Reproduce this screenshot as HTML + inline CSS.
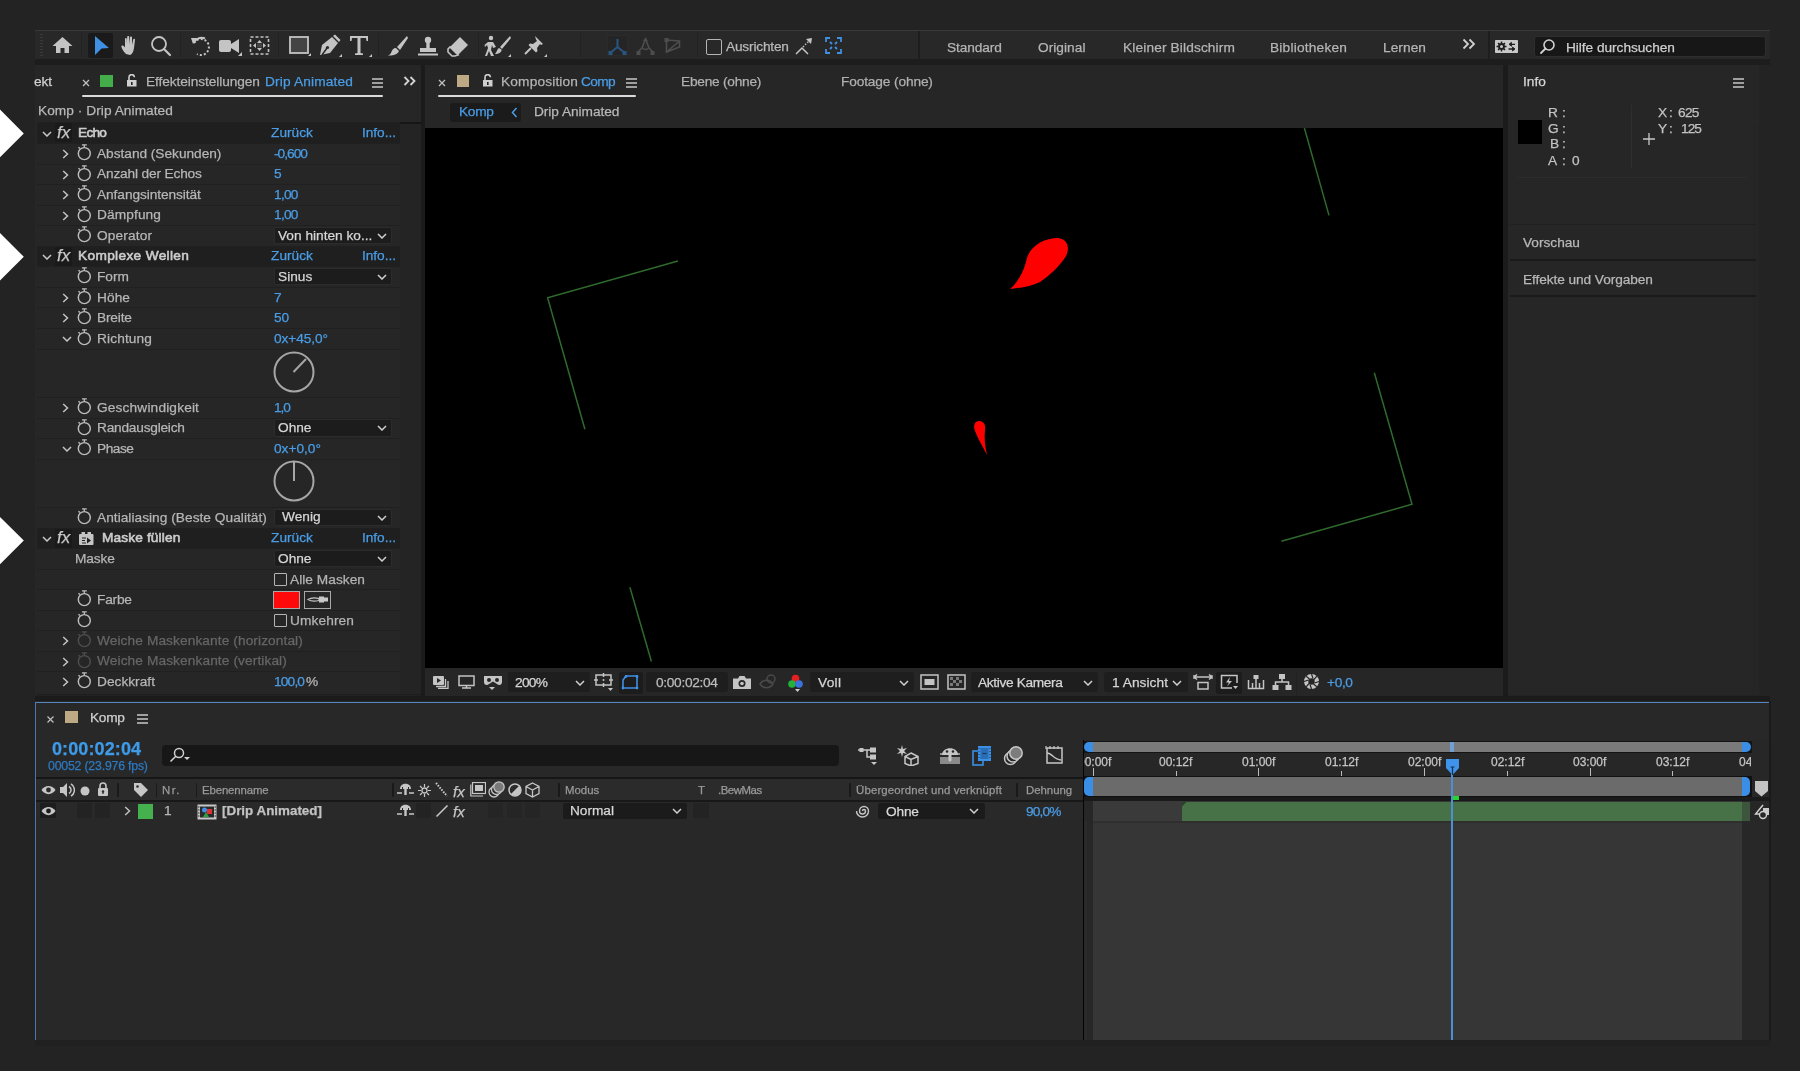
<!DOCTYPE html><html><head><meta charset="utf-8"><style>
html,body{margin:0;padding:0;}
body{width:1800px;height:1071px;background:#232323;position:relative;overflow:hidden;font-family:"Liberation Sans", sans-serif;}
div,svg{position:absolute;box-sizing:border-box;}
.t{white-space:nowrap;-webkit-text-stroke:0.25px currentColor;will-change:transform;}
</style></head><body>
<div style="left:35px;top:30px;width:1735px;height:1px;background:#393939;"></div>
<div style="left:35px;top:31px;width:1735px;height:28px;background:#282828;"></div>
<div style="left:35px;top:59px;width:1735px;height:6px;background:#1d1d1d;"></div>
<div style="left:40px;top:34px;width:3px;height:22px;background:repeating-linear-gradient(#3a3a3a 0 1px,transparent 1px 3px)"></div>
<div style="left:81px;top:33px;width:1px;height:24px;background:#222;"></div>
<div style="left:180px;top:33px;width:1px;height:24px;background:#222;"></div>
<div style="left:278px;top:33px;width:1px;height:24px;background:#222;"></div>
<div style="left:378px;top:33px;width:1px;height:24px;background:#222;"></div>
<div style="left:478px;top:33px;width:1px;height:24px;background:#222;"></div>
<div style="left:580px;top:33px;width:1px;height:24px;background:#222;"></div>
<div style="left:697px;top:33px;width:1px;height:24px;background:#222;"></div>
<div style="left:918px;top:31px;width:2px;height:28px;background:#1e1e1e;"></div>
<div style="left:1488px;top:31px;width:2px;height:28px;background:#1e1e1e;"></div>
<div style="left:88px;top:33px;width:25px;height:25px;background:#1a1a1a;border-radius:2px;"></div>
<svg style="left:52px;top:36px;" width="21" height="18" viewBox="0 0 21 18"><path d="M10.5 1 L20.5 10 L17 10 L17 17 L12.5 17 L12.5 12 L8.5 12 L8.5 17 L4 17 L4 10 L0.5 10 Z" fill="#c4c4c4"/></svg>
<svg style="left:93px;top:35px;" width="17" height="21" viewBox="0 0 17 21"><path d="M2 1 L16 13 L8.5 13.5 L2 20 Z" fill="#3f8fe3"/></svg>
<svg style="left:120px;top:35px;" width="21" height="21" viewBox="0 0 21 21"><path d="M6 19 C3 16 1 12 1.5 11 C2.2 10 3.5 10.5 5 12.5 L5 4 C5 2.8 6.8 2.8 6.8 4 L6.8 9.5 L7.2 2 C7.2 0.8 9.2 0.8 9.2 2 L9.4 9.5 L10 2.5 C10 1.3 12 1.3 12 2.5 L12 10 L13.2 4.5 C13.4 3.3 15.2 3.5 15 4.8 L14 13 C13.5 17 12 19.5 10 20 Z" fill="#c4c4c4"/></svg>
<svg style="left:150px;top:35px;" width="22" height="22" viewBox="0 0 22 22"><circle cx="9" cy="9" r="7" fill="none" stroke="#c4c4c4" stroke-width="1.8"/><path d="M14 14 L20 20" stroke="#c4c4c4" stroke-width="2.2" stroke-linecap="round"/></svg>
<svg style="left:189px;top:35px;" width="23" height="22" viewBox="0 0 23 22"><path d="M5 8 A8 8 0 1 1 8 19" fill="none" stroke="#c4c4c4" stroke-width="2" stroke-dasharray="2 2"/><path d="M2 3 L9 3 L4 9 Z" fill="#c4c4c4"/><path d="M5 8 A8 8 0 0 1 16 3.5" fill="none" stroke="#c4c4c4" stroke-width="2"/></svg>
<svg style="left:218px;top:35px;" width="25" height="22" viewBox="0 0 25 22"><rect x="1" y="5" width="12" height="12" rx="2" fill="#c4c4c4"/><path d="M13 9 L21 4 L21 18 L13 13 Z" fill="#c4c4c4"/><path d="M20 21 L24 17 L24 21 Z" fill="#c4c4c4"/></svg>
<svg style="left:249px;top:35px;" width="22" height="22" viewBox="0 0 22 22"><rect x="1.5" y="2" width="18" height="17" fill="none" stroke="#c4c4c4" stroke-width="1.6" stroke-dasharray="3 2"/><path d="M10.5 5 L13 8 L8 8Z M10.5 16 L13 13 L8 13Z M4 10.5 L7 8 L7 13Z M17 10.5 L14 8 L14 13Z" fill="#c4c4c4"/><rect x="8" y="8.5" width="5" height="4" fill="#444"/></svg>
<svg style="left:288px;top:35px;" width="24" height="22" viewBox="0 0 24 22"><rect x="2" y="2" width="18" height="16" fill="#444" stroke="#c4c4c4" stroke-width="1.8"/><path d="M20 21 L23 18 L23 21Z" fill="#c4c4c4"/></svg>
<svg style="left:317px;top:34px;" width="26" height="24" viewBox="0 0 26 24"><path d="M15 3 L21 9 L13 19 L3 21 L5 11 Z" fill="#c4c4c4"/><path d="M5 21 L10 14" stroke="#282828" stroke-width="1.5"/><circle cx="10.5" cy="13.5" r="1.6" fill="#282828"/><path d="M16 2 L18 0.5 L23.5 6 L22 8Z" fill="#c4c4c4"/><path d="M22 23 L25 20 L25 23Z" fill="#c4c4c4"/></svg>
<svg style="left:348px;top:34px;" width="25" height="24" viewBox="0 0 25 24"><path d="M2 2 L20 2 L20 7 L18.5 7 L18 4 L12.5 4 L12.5 19 L15 19.5 L15 21 L7 21 L7 19.5 L9.5 19 L9.5 4 L4 4 L3.5 7 L2 7 Z" fill="#c4c4c4"/><path d="M21 23 L24 20 L24 23Z" fill="#c4c4c4"/></svg>
<svg style="left:387px;top:35px;" width="22" height="22" viewBox="0 0 22 22"><path d="M20 1 L10 12 L13 15 L21 3 Z" fill="#c4c4c4"/><path d="M9 13 C6 13 5 15 4 18 C3 19.5 2 20 1 20.5 C5 21 10 20 12 16 Z" fill="#c4c4c4"/></svg>
<svg style="left:417px;top:35px;" width="22" height="22" viewBox="0 0 22 22"><circle cx="11" cy="5" r="3.2" fill="#c4c4c4"/><rect x="9.3" y="7" width="3.4" height="6" fill="#c4c4c4"/><rect x="3" y="13" width="16" height="4" fill="#c4c4c4"/><rect x="1" y="18.5" width="20" height="2" fill="#c4c4c4"/></svg>
<svg style="left:447px;top:35px;" width="23" height="22" viewBox="0 0 23 22"><path d="M13 2 L21 10 L11 20 L3 12 Z" fill="#c4c4c4"/><path d="M3 12 L11 20 L8 21 L5 21 L1 17 L1 14Z" fill="none" stroke="#c4c4c4" stroke-width="1.6"/></svg>
<svg style="left:484px;top:34px;" width="28" height="24" viewBox="0 0 28 24"><circle cx="7" cy="4" r="2.2" fill="#c4c4c4"/><path d="M4 8 L9 8 L12 13 L9 14 L8 11 L7 16 L10 22 L7 22 L5 17 L3 22 L1 22 L4 14 L3 11 L1 13 L0.5 11 Z" fill="#c4c4c4"/><path d="M26 2 L16 13 L18 15 L27 4Z" fill="#c4c4c4"/><path d="M15 14 C13 15 13 18 11 20 C15 20 18 18 17.5 15.5Z" fill="#c4c4c4"/><path d="M24 23 L27 20 L27 23Z" fill="#c4c4c4"/></svg>
<svg style="left:523px;top:34px;" width="26" height="24" viewBox="0 0 26 24"><path d="M12 2 L20 10 L18 11 L17 10 L14 14 L14.5 17 L13 18.5 L5.5 11 L7 9.5 L10 10 L14 7 L13 5.5 Z" fill="#c4c4c4"/><path d="M8 14 L2 20" stroke="#c4c4c4" stroke-width="2"/><path d="M21 23 L24 20 L24 23Z" fill="#c4c4c4"/></svg>
<div style="left:607px;top:35px;width:21px;height:21px;background:#252525;border:1px solid #2b2b2b;"></div>
<svg style="left:607px;top:36px;" width="21" height="20" viewBox="0 0 21 20"><path d="M10.5 3 L10.5 11 L3 17 M10.5 11 L18 17" stroke="#285680" stroke-width="2" fill="none"/><rect x="1.5" y="15" width="4" height="4" fill="#285680"/><rect x="15.5" y="15" width="4" height="4" fill="#285680"/></svg>
<svg style="left:635px;top:36px;" width="21" height="20" viewBox="0 0 21 20"><path d="M10.5 3 L14 12 Q10.5 15 7 12 Z" stroke="#4d4d4d" stroke-width="1.6" fill="none"/><path d="M8 5 L10.5 1.5 L13 5Z" fill="#4d4d4d"/><path d="M7 12 L3 16 M14 12 L18 16" stroke="#4d4d4d" stroke-width="1.6"/><rect x="1.5" y="15" width="4" height="4" fill="#4d4d4d"/><rect x="15.5" y="15" width="4" height="4" fill="#4d4d4d"/></svg>
<svg style="left:664px;top:36px;" width="18" height="20" viewBox="0 0 18 20"><path d="M2.5 4 L2.5 16 L15.5 11 L15.5 5 Z M2.5 16 L15.5 5" stroke="#4d4d4d" stroke-width="1.6" fill="none"/><rect x="0.5" y="2" width="4" height="4" fill="#4d4d4d"/></svg>
<div style="left:706px;top:39px;width:16px;height:16px;background:transparent;border:1.6px solid #b5b5b5;border-radius:2px;"></div>
<div class="t" style="left:726px;top:40.20px;font-size:13.7px;line-height:13.7px;color:#b9b9b9;letter-spacing:-0.192px;">Ausrichten</div>
<svg style="left:795px;top:37px;" width="18" height="19" viewBox="0 0 18 19"><path d="M1 17 L7 11 L13 17" stroke="#c4c4c4" stroke-width="1.5" fill="none"/><path d="M8 10 L14 4" stroke="#c4c4c4" stroke-width="1.4" stroke-dasharray="1.5 1.5"/><path d="M11 2 L17 1 L16 7 Z" fill="#c4c4c4"/></svg>
<svg style="left:825px;top:37px;" width="17" height="18" viewBox="0 0 17 18"><path d="M1 5 L1 1 L5 1 M12 1 L16 1 L16 5 M16 12 L16 16 L12 16 M5 16 L1 16 L1 12" stroke="#3f8fe3" stroke-width="1.8" fill="none"/><path d="M5 5 L7 7 M12 5 L10 7 M5 12 L7 10 M12 12 L10 10" stroke="#3f8fe3" stroke-width="1.8"/></svg>
<div class="t" style="left:946.5px;top:40.60px;font-size:13.7px;line-height:13.7px;color:#b5b5b5;letter-spacing:-0.086px;">Standard</div>
<div class="t" style="left:1038.3px;top:40.60px;font-size:13.7px;line-height:13.7px;color:#b5b5b5;letter-spacing:0.042px;">Original</div>
<div class="t" style="left:1122.5px;top:40.60px;font-size:13.7px;line-height:13.7px;color:#b5b5b5;letter-spacing:0.139px;">Kleiner Bildschirm</div>
<div class="t" style="left:1270px;top:40.60px;font-size:13.7px;line-height:13.7px;color:#b5b5b5;letter-spacing:0.215px;">Bibliotheken</div>
<div class="t" style="left:1383px;top:40.60px;font-size:13.7px;line-height:13.7px;color:#b5b5b5;letter-spacing:0.069px;">Lernen</div>
<svg style="left:1462px;top:38px;" width="14" height="12" viewBox="0 0 14 12"><path d="M1.5 1.5 L6 6 L1.5 10.5 M7.5 1.5 L12 6 L7.5 10.5" stroke="#d0d0d0" stroke-width="1.8" fill="none"/></svg>
<svg style="left:1495px;top:40px;" width="23" height="13" viewBox="0 0 23 13"><rect x="0" y="0" width="23" height="13" rx="0.8" fill="#c8c8c8"/><circle cx="6.5" cy="6.5" r="3.4" fill="#1e1e1e"/><circle cx="6.5" cy="6.5" r="1.5" fill="#c8c8c8"/><path d="M6.5 1.5 L6.5 11.5 M1.5 6.5 L11.5 6.5 M3 3 L10 10 M10 3 L3 10" stroke="#1e1e1e" stroke-width="1.5"/><circle cx="6.5" cy="6.5" r="1.5" fill="#c8c8c8"/><path d="M14.5 4.3 L20 4.3 M13.5 9 L19.5 9" stroke="#1e1e1e" stroke-width="1.3"/><path d="M16.5 2.3 L14 4.3 L16.5 6.3Z M17.5 7 L20 9 L17.5 11Z" fill="#1e1e1e" stroke="#1e1e1e" stroke-width="0.8"/></svg>
<div style="left:1534px;top:36px;width:232px;height:21px;background:#171717;border-radius:3px;border:1px solid #2e2e2e;"></div>
<svg style="left:1539px;top:38px;" width="18" height="18" viewBox="0 0 18 18"><circle cx="10" cy="7" r="5" fill="none" stroke="#d0d0d0" stroke-width="1.6"/><path d="M6.5 10.5 L2 15" stroke="#d0d0d0" stroke-width="1.8" stroke-linecap="round"/></svg>
<div class="t" style="left:1566px;top:40.60px;font-size:13.7px;line-height:13.7px;color:#cfcfcf;letter-spacing:-0.041px;">Hilfe durchsuchen</div>
<div style="left:35px;top:65px;width:386px;height:630px;background:#262626;"></div>
<div style="left:421px;top:65px;width:4px;height:635px;background:#1b1b1b;"></div>
<div class="t" style="left:34.4px;top:75.20px;font-size:13.7px;line-height:13.7px;color:#d2d2d2;letter-spacing:-0.137px;">ekt</div>
<svg style="left:82px;top:79px;" width="8" height="8" viewBox="0 0 8 8"><path d="M1 1 L7 7 M7 1 L1 7" stroke="#c0c0c0" stroke-width="1.3"/></svg>
<div style="left:100px;top:75px;width:13px;height:12px;background:#43ad4a;"></div>
<svg style="left:126px;top:74px;" width="11" height="13" viewBox="0 0 11 13"><path d="M3 6 L3 3.5 A2.7 2.7 0 0 1 8.4 3.2" fill="none" stroke="#cfcfcf" stroke-width="1.6"/><rect x="1" y="6" width="9.5" height="6.5" fill="#cfcfcf"/><rect x="5" y="8" width="1.6" height="3" fill="#262626"/></svg>
<div class="t" style="left:146.4px;top:75.20px;font-size:13.7px;line-height:13.7px;color:#b4b4b4;letter-spacing:-0.084px;">Effekteinstellungen</div>
<div class="t" style="left:265.3px;top:75.20px;font-size:13.7px;line-height:13.7px;color:#4a9de6;letter-spacing:0.163px;">Drip Animated</div>
<svg style="left:372px;top:78px;" width="11" height="10" viewBox="0 0 11 10"><path d="M0 1 L11 1 M0 5 L11 5 M0 9 L11 9" stroke="#c8c8c8" stroke-width="1.5"/></svg>
<div style="left:82px;top:95px;width:301px;height:2px;background:#dadada;border-radius:1px;"></div>
<svg style="left:403px;top:76px;" width="14" height="10" viewBox="0 0 14 10"><path d="M1.5 1 L5.5 5 L1.5 9 M7.5 1 L11.5 5 L7.5 9" stroke="#d4d4d4" stroke-width="1.8" fill="none"/></svg>
<div class="t" style="left:38.3px;top:104.00px;font-size:13.7px;line-height:13.7px;color:#b8b8b8;letter-spacing:0.052px;">Komp · Drip Animated</div>
<div style="left:37px;top:122px;width:384px;height:2px;background:#161616;"></div>
<div style="left:400px;top:124px;width:21px;height:571px;background:#242424;"></div>
<div style="left:37px;top:122px;width:363px;height:21px;background:#1f1f1f;"></div>
<div style="left:37px;top:122px;width:363px;height:1px;background:#202020;"></div>
<div style="left:55px;top:123px;width:17px;height:19px;background:#1a1a1a;"></div>
<svg style="left:42px;top:130.5px;" width="10" height="6" viewBox="0 0 10 6"><path d="M1 1 L5.0 5 L9 1" stroke="#c8c8c8" stroke-width="1.5" fill="none"/></svg>
<div class="t" style="left:56.5px;top:123.61px;font-size:17px;line-height:17px;color:#c8c8c8;font-style:italic;font-family:"Liberation Serif",serif;-webkit-text-stroke:0;">fx</div>
<div class="t" style="left:78.3px;top:125.70px;font-size:13.7px;line-height:13.7px;color:#cdcdcd;letter-spacing:-0.742px;-webkit-text-stroke:0.6px #cdcdcd;">Echo</div>
<div class="t" style="left:270.6px;top:125.70px;font-size:13.7px;line-height:13.7px;color:#4a9de6;letter-spacing:0.026px;">Zurück</div>
<div class="t" style="left:362.3px;top:125.70px;font-size:13.7px;line-height:13.7px;color:#4a9de6;letter-spacing:-0.045px;">Info...</div>
<div style="left:37px;top:143px;width:363px;height:21px;background:#262626;"></div>
<div style="left:37px;top:143px;width:363px;height:1px;background:#202020;"></div>
<svg style="left:62px;top:149.05px;" width="7" height="10" viewBox="0 0 7 10"><path d="M1.2 1 L5.5 5 L1.2 9" stroke="#c4c4c4" stroke-width="1.5" fill="none"/></svg>
<svg style="left:77px;top:143.05px;" width="15" height="19" viewBox="0 0 15 19"><circle cx="7.3" cy="10.6" r="6" fill="none" stroke="#bdbdbd" stroke-width="1.45"/><path d="M5 1.9 L9.8 1.9 M7.3 1.9 L7.3 4.6" stroke="#bdbdbd" stroke-width="1.3"/><path d="M1.5 4.2 L2.8 5.5" stroke="#bdbdbd" stroke-width="1.5"/></svg>
<div class="t" style="left:97px;top:146.65px;font-size:13.7px;line-height:13.7px;color:#b6b6b6;letter-spacing:-0.024px;">Abstand (Sekunden)</div>
<div class="t" style="left:274.3px;top:146.65px;font-size:13.7px;line-height:13.7px;color:#4a9de6;letter-spacing:-0.969px;">-0,600</div>
<div style="left:37px;top:164px;width:363px;height:20px;background:#262626;"></div>
<div style="left:37px;top:164px;width:363px;height:1px;background:#202020;"></div>
<svg style="left:62px;top:169.60000000000002px;" width="7" height="10" viewBox="0 0 7 10"><path d="M1.2 1 L5.5 5 L1.2 9" stroke="#c4c4c4" stroke-width="1.5" fill="none"/></svg>
<svg style="left:77px;top:163.60000000000002px;" width="15" height="19" viewBox="0 0 15 19"><circle cx="7.3" cy="10.6" r="6" fill="none" stroke="#bdbdbd" stroke-width="1.45"/><path d="M5 1.9 L9.8 1.9 M7.3 1.9 L7.3 4.6" stroke="#bdbdbd" stroke-width="1.3"/><path d="M1.5 4.2 L2.8 5.5" stroke="#bdbdbd" stroke-width="1.5"/></svg>
<div class="t" style="left:97px;top:167.20px;font-size:13.7px;line-height:13.7px;color:#b6b6b6;letter-spacing:-0.158px;">Anzahl der Echos</div>
<div class="t" style="left:274.3px;top:167.20px;font-size:13.7px;line-height:13.7px;color:#4a9de6;">5</div>
<div style="left:37px;top:184px;width:363px;height:21px;background:#262626;"></div>
<div style="left:37px;top:184px;width:363px;height:1px;background:#202020;"></div>
<svg style="left:62px;top:190.15000000000003px;" width="7" height="10" viewBox="0 0 7 10"><path d="M1.2 1 L5.5 5 L1.2 9" stroke="#c4c4c4" stroke-width="1.5" fill="none"/></svg>
<svg style="left:77px;top:184.15000000000003px;" width="15" height="19" viewBox="0 0 15 19"><circle cx="7.3" cy="10.6" r="6" fill="none" stroke="#bdbdbd" stroke-width="1.45"/><path d="M5 1.9 L9.8 1.9 M7.3 1.9 L7.3 4.6" stroke="#bdbdbd" stroke-width="1.3"/><path d="M1.5 4.2 L2.8 5.5" stroke="#bdbdbd" stroke-width="1.5"/></svg>
<div class="t" style="left:97px;top:187.75px;font-size:13.7px;line-height:13.7px;color:#b6b6b6;letter-spacing:-0.069px;">Anfangsintensität</div>
<div class="t" style="left:274.3px;top:187.75px;font-size:13.7px;line-height:13.7px;color:#4a9de6;letter-spacing:-0.721px;">1,00</div>
<div style="left:37px;top:205px;width:363px;height:20px;background:#262626;"></div>
<div style="left:37px;top:205px;width:363px;height:1px;background:#202020;"></div>
<svg style="left:62px;top:210.70000000000005px;" width="7" height="10" viewBox="0 0 7 10"><path d="M1.2 1 L5.5 5 L1.2 9" stroke="#c4c4c4" stroke-width="1.5" fill="none"/></svg>
<svg style="left:77px;top:204.70000000000005px;" width="15" height="19" viewBox="0 0 15 19"><circle cx="7.3" cy="10.6" r="6" fill="none" stroke="#bdbdbd" stroke-width="1.45"/><path d="M5 1.9 L9.8 1.9 M7.3 1.9 L7.3 4.6" stroke="#bdbdbd" stroke-width="1.3"/><path d="M1.5 4.2 L2.8 5.5" stroke="#bdbdbd" stroke-width="1.5"/></svg>
<div class="t" style="left:97px;top:208.30px;font-size:13.7px;line-height:13.7px;color:#b6b6b6;letter-spacing:0.113px;">Dämpfung</div>
<div class="t" style="left:274.3px;top:208.30px;font-size:13.7px;line-height:13.7px;color:#4a9de6;letter-spacing:-0.721px;">1,00</div>
<div style="left:37px;top:225px;width:363px;height:21px;background:#262626;"></div>
<div style="left:37px;top:225px;width:363px;height:1px;background:#202020;"></div>
<svg style="left:77px;top:225.25000000000006px;" width="15" height="19" viewBox="0 0 15 19"><circle cx="7.3" cy="10.6" r="6" fill="none" stroke="#bdbdbd" stroke-width="1.45"/><path d="M5 1.9 L9.8 1.9 M7.3 1.9 L7.3 4.6" stroke="#bdbdbd" stroke-width="1.3"/><path d="M1.5 4.2 L2.8 5.5" stroke="#bdbdbd" stroke-width="1.5"/></svg>
<div class="t" style="left:97px;top:228.85px;font-size:13.7px;line-height:13.7px;color:#b6b6b6;letter-spacing:0.134px;">Operator</div>
<div style="left:273.7px;top:226.75000000000006px;width:118.5px;height:17.5px;background:#1c1c1c;border:1px solid #2c2c2c;border-radius:2px;"></div>
<div class="t" style="left:278px;top:228.65px;font-size:13.7px;line-height:13.7px;color:#d6d6d6;">Von hinten ko...</div>
<svg style="left:377.2px;top:233.00000000000006px;" width="10" height="6" viewBox="0 0 10 6"><path d="M1 1 L5.0 5 L9 1" stroke="#cfcfcf" stroke-width="1.5" fill="none"/></svg>
<div style="left:37px;top:246px;width:363px;height:20px;background:#1f1f1f;"></div>
<div style="left:37px;top:246px;width:363px;height:1px;background:#202020;"></div>
<div style="left:55px;top:247px;width:17px;height:19px;background:#1a1a1a;"></div>
<svg style="left:42px;top:253.80000000000007px;" width="10" height="6" viewBox="0 0 10 6"><path d="M1 1 L5.0 5 L9 1" stroke="#c8c8c8" stroke-width="1.5" fill="none"/></svg>
<div class="t" style="left:56.5px;top:246.91px;font-size:17px;line-height:17px;color:#c8c8c8;font-style:italic;font-family:"Liberation Serif",serif;-webkit-text-stroke:0;">fx</div>
<div class="t" style="left:78.3px;top:249.00px;font-size:13.7px;line-height:13.7px;color:#cdcdcd;letter-spacing:0.332px;-webkit-text-stroke:0.6px #cdcdcd;">Komplexe Wellen</div>
<div class="t" style="left:270.6px;top:249.00px;font-size:13.7px;line-height:13.7px;color:#4a9de6;letter-spacing:0.026px;">Zurück</div>
<div class="t" style="left:362.3px;top:249.00px;font-size:13.7px;line-height:13.7px;color:#4a9de6;letter-spacing:-0.045px;">Info...</div>
<div style="left:37px;top:266px;width:363px;height:21px;background:#262626;"></div>
<div style="left:37px;top:266px;width:363px;height:1px;background:#202020;"></div>
<svg style="left:77px;top:266.3500000000001px;" width="15" height="19" viewBox="0 0 15 19"><circle cx="7.3" cy="10.6" r="6" fill="none" stroke="#bdbdbd" stroke-width="1.45"/><path d="M5 1.9 L9.8 1.9 M7.3 1.9 L7.3 4.6" stroke="#bdbdbd" stroke-width="1.3"/><path d="M1.5 4.2 L2.8 5.5" stroke="#bdbdbd" stroke-width="1.5"/></svg>
<div class="t" style="left:97px;top:269.95px;font-size:13.7px;line-height:13.7px;color:#b6b6b6;letter-spacing:0.013px;">Form</div>
<div style="left:273.7px;top:267.8500000000001px;width:118.5px;height:17.5px;background:#1c1c1c;border:1px solid #2c2c2c;border-radius:2px;"></div>
<div class="t" style="left:278px;top:269.75px;font-size:13.7px;line-height:13.7px;color:#d6d6d6;">Sinus</div>
<svg style="left:377.2px;top:274.1000000000001px;" width="10" height="6" viewBox="0 0 10 6"><path d="M1 1 L5.0 5 L9 1" stroke="#cfcfcf" stroke-width="1.5" fill="none"/></svg>
<div style="left:37px;top:287px;width:363px;height:20px;background:#262626;"></div>
<div style="left:37px;top:287px;width:363px;height:1px;background:#202020;"></div>
<svg style="left:62px;top:292.9000000000001px;" width="7" height="10" viewBox="0 0 7 10"><path d="M1.2 1 L5.5 5 L1.2 9" stroke="#c4c4c4" stroke-width="1.5" fill="none"/></svg>
<svg style="left:77px;top:286.9000000000001px;" width="15" height="19" viewBox="0 0 15 19"><circle cx="7.3" cy="10.6" r="6" fill="none" stroke="#bdbdbd" stroke-width="1.45"/><path d="M5 1.9 L9.8 1.9 M7.3 1.9 L7.3 4.6" stroke="#bdbdbd" stroke-width="1.3"/><path d="M1.5 4.2 L2.8 5.5" stroke="#bdbdbd" stroke-width="1.5"/></svg>
<div class="t" style="left:97px;top:290.50px;font-size:13.7px;line-height:13.7px;color:#b6b6b6;letter-spacing:0.083px;">Höhe</div>
<div class="t" style="left:274.3px;top:290.50px;font-size:13.7px;line-height:13.7px;color:#4a9de6;">7</div>
<div style="left:37px;top:307px;width:363px;height:21px;background:#262626;"></div>
<div style="left:37px;top:307px;width:363px;height:1px;background:#202020;"></div>
<svg style="left:62px;top:313.4500000000001px;" width="7" height="10" viewBox="0 0 7 10"><path d="M1.2 1 L5.5 5 L1.2 9" stroke="#c4c4c4" stroke-width="1.5" fill="none"/></svg>
<svg style="left:77px;top:307.4500000000001px;" width="15" height="19" viewBox="0 0 15 19"><circle cx="7.3" cy="10.6" r="6" fill="none" stroke="#bdbdbd" stroke-width="1.45"/><path d="M5 1.9 L9.8 1.9 M7.3 1.9 L7.3 4.6" stroke="#bdbdbd" stroke-width="1.3"/><path d="M1.5 4.2 L2.8 5.5" stroke="#bdbdbd" stroke-width="1.5"/></svg>
<div class="t" style="left:97px;top:311.05px;font-size:13.7px;line-height:13.7px;color:#b6b6b6;letter-spacing:-0.158px;">Breite</div>
<div class="t" style="left:274.3px;top:311.05px;font-size:13.7px;line-height:13.7px;color:#4a9de6;">50</div>
<div style="left:37px;top:328px;width:363px;height:21px;background:#262626;"></div>
<div style="left:37px;top:328px;width:363px;height:1px;background:#202020;"></div>
<svg style="left:62px;top:336.0000000000001px;" width="10" height="6" viewBox="0 0 10 6"><path d="M1 1 L5.0 5 L9 1" stroke="#c4c4c4" stroke-width="1.5" fill="none"/></svg>
<svg style="left:77px;top:328.0000000000001px;" width="15" height="19" viewBox="0 0 15 19"><circle cx="7.3" cy="10.6" r="6" fill="none" stroke="#bdbdbd" stroke-width="1.45"/><path d="M5 1.9 L9.8 1.9 M7.3 1.9 L7.3 4.6" stroke="#bdbdbd" stroke-width="1.3"/><path d="M1.5 4.2 L2.8 5.5" stroke="#bdbdbd" stroke-width="1.5"/></svg>
<div class="t" style="left:97px;top:331.60px;font-size:13.7px;line-height:13.7px;color:#b6b6b6;letter-spacing:0.133px;">Richtung</div>
<div class="t" style="left:274.3px;top:331.60px;font-size:13.7px;line-height:13.7px;color:#4a9de6;letter-spacing:-0.087px;">0x+45,0°</div>
<div style="left:37px;top:349px;width:363px;height:48px;background:#262626;"></div>
<div style="left:37px;top:349px;width:363px;height:1px;background:#202020;"></div>
<svg style="left:272px;top:350px;" width="44" height="44" viewBox="0 0 44 44"><circle cx="22" cy="22" r="19.5" fill="none" stroke="#a6a6a6" stroke-width="2"/><path d="M21.5 22 L34 9" stroke="#a6a6a6" stroke-width="2"/></svg>
<div style="left:37px;top:397px;width:363px;height:21px;background:#262626;"></div>
<div style="left:37px;top:397px;width:363px;height:1px;background:#202020;"></div>
<svg style="left:62px;top:403px;" width="7" height="10" viewBox="0 0 7 10"><path d="M1.2 1 L5.5 5 L1.2 9" stroke="#c4c4c4" stroke-width="1.5" fill="none"/></svg>
<svg style="left:77px;top:397.0px;" width="15" height="19" viewBox="0 0 15 19"><circle cx="7.3" cy="10.6" r="6" fill="none" stroke="#bdbdbd" stroke-width="1.45"/><path d="M5 1.9 L9.8 1.9 M7.3 1.9 L7.3 4.6" stroke="#bdbdbd" stroke-width="1.3"/><path d="M1.5 4.2 L2.8 5.5" stroke="#bdbdbd" stroke-width="1.5"/></svg>
<div class="t" style="left:97px;top:400.60px;font-size:13.7px;line-height:13.7px;color:#b6b6b6;letter-spacing:0.161px;">Geschwindigkeit</div>
<div class="t" style="left:274.3px;top:400.60px;font-size:13.7px;line-height:13.7px;color:#4a9de6;letter-spacing:-1.022px;">1,0</div>
<div style="left:37px;top:418px;width:363px;height:20px;background:#262626;"></div>
<div style="left:37px;top:418px;width:363px;height:1px;background:#202020;"></div>
<svg style="left:77px;top:417.55px;" width="15" height="19" viewBox="0 0 15 19"><circle cx="7.3" cy="10.6" r="6" fill="none" stroke="#bdbdbd" stroke-width="1.45"/><path d="M5 1.9 L9.8 1.9 M7.3 1.9 L7.3 4.6" stroke="#bdbdbd" stroke-width="1.3"/><path d="M1.5 4.2 L2.8 5.5" stroke="#bdbdbd" stroke-width="1.5"/></svg>
<div class="t" style="left:97px;top:421.15px;font-size:13.7px;line-height:13.7px;color:#b6b6b6;letter-spacing:-0.219px;">Randausgleich</div>
<div style="left:273.7px;top:419.05px;width:118.5px;height:17.5px;background:#1c1c1c;border:1px solid #2c2c2c;border-radius:2px;"></div>
<div class="t" style="left:278px;top:420.95px;font-size:13.7px;line-height:13.7px;color:#d6d6d6;">Ohne</div>
<svg style="left:377.2px;top:425.3px;" width="10" height="6" viewBox="0 0 10 6"><path d="M1 1 L5.0 5 L9 1" stroke="#cfcfcf" stroke-width="1.5" fill="none"/></svg>
<div style="left:37px;top:438px;width:363px;height:21px;background:#262626;"></div>
<div style="left:37px;top:438px;width:363px;height:1px;background:#202020;"></div>
<svg style="left:62px;top:446.1px;" width="10" height="6" viewBox="0 0 10 6"><path d="M1 1 L5.0 5 L9 1" stroke="#c4c4c4" stroke-width="1.5" fill="none"/></svg>
<svg style="left:77px;top:438.1px;" width="15" height="19" viewBox="0 0 15 19"><circle cx="7.3" cy="10.6" r="6" fill="none" stroke="#bdbdbd" stroke-width="1.45"/><path d="M5 1.9 L9.8 1.9 M7.3 1.9 L7.3 4.6" stroke="#bdbdbd" stroke-width="1.3"/><path d="M1.5 4.2 L2.8 5.5" stroke="#bdbdbd" stroke-width="1.5"/></svg>
<div class="t" style="left:97px;top:441.70px;font-size:13.7px;line-height:13.7px;color:#b6b6b6;letter-spacing:-0.461px;">Phase</div>
<div class="t" style="left:274.3px;top:441.70px;font-size:13.7px;line-height:13.7px;color:#4a9de6;letter-spacing:0.002px;">0x+0,0°</div>
<div style="left:37px;top:459px;width:363px;height:48px;background:#262626;"></div>
<div style="left:37px;top:459px;width:363px;height:1px;background:#202020;"></div>
<svg style="left:272px;top:459px;" width="44" height="44" viewBox="0 0 44 44"><circle cx="22" cy="22" r="19.5" fill="none" stroke="#a6a6a6" stroke-width="2"/><path d="M22 22 L22 3" stroke="#a6a6a6" stroke-width="2"/></svg>
<div style="left:37px;top:507px;width:363px;height:21px;background:#262626;"></div>
<div style="left:37px;top:507px;width:363px;height:1px;background:#202020;"></div>
<svg style="left:77px;top:507.0px;" width="15" height="19" viewBox="0 0 15 19"><circle cx="7.3" cy="10.6" r="6" fill="none" stroke="#bdbdbd" stroke-width="1.45"/><path d="M5 1.9 L9.8 1.9 M7.3 1.9 L7.3 4.6" stroke="#bdbdbd" stroke-width="1.3"/><path d="M1.5 4.2 L2.8 5.5" stroke="#bdbdbd" stroke-width="1.5"/></svg>
<div class="t" style="left:97px;top:510.60px;font-size:13.7px;line-height:13.7px;color:#b6b6b6;letter-spacing:0.034px;">Antialiasing (Beste Qualität)</div>
<div style="left:273.7px;top:508.5px;width:118.5px;height:17.5px;background:#1c1c1c;border:1px solid #2c2c2c;border-radius:2px;"></div>
<div class="t" style="left:282px;top:510.40px;font-size:13.7px;line-height:13.7px;color:#d6d6d6;">Wenig</div>
<svg style="left:377.2px;top:514.75px;" width="10" height="6" viewBox="0 0 10 6"><path d="M1 1 L5.0 5 L9 1" stroke="#cfcfcf" stroke-width="1.5" fill="none"/></svg>
<div style="left:37px;top:528px;width:363px;height:20px;background:#1f1f1f;"></div>
<div style="left:37px;top:528px;width:363px;height:1px;background:#202020;"></div>
<div style="left:55px;top:529px;width:17px;height:19px;background:#1a1a1a;"></div>
<svg style="left:42px;top:535.55px;" width="10" height="6" viewBox="0 0 10 6"><path d="M1 1 L5.0 5 L9 1" stroke="#c8c8c8" stroke-width="1.5" fill="none"/></svg>
<div class="t" style="left:56.5px;top:528.66px;font-size:17px;line-height:17px;color:#c8c8c8;font-style:italic;font-family:"Liberation Serif",serif;-webkit-text-stroke:0;">fx</div>
<svg style="left:79px;top:531.55px;" width="15" height="13" viewBox="0 0 15 13"><rect x="0" y="2" width="14.5" height="11" rx="1" fill="#c4c4c4"/><rect x="2.5" y="0" width="3.5" height="3" fill="#c4c4c4"/><rect x="8.5" y="0" width="3.5" height="3" fill="#c4c4c4"/><path d="M3 6 L7 6 M3 8.5 L6 8.5 M3 11 L7 11" stroke="#1f1f1f" stroke-width="1.2"/><path d="M8 5.5 L12 8.5 L8 11.5Z" fill="#1f1f1f"/></svg>
<div class="t" style="left:101.9px;top:530.75px;font-size:13.7px;line-height:13.7px;color:#cdcdcd;letter-spacing:0.136px;-webkit-text-stroke:0.6px #cdcdcd;">Maske füllen</div>
<div class="t" style="left:270.6px;top:530.75px;font-size:13.7px;line-height:13.7px;color:#4a9de6;letter-spacing:0.026px;">Zurück</div>
<div class="t" style="left:362.3px;top:530.75px;font-size:13.7px;line-height:13.7px;color:#4a9de6;letter-spacing:-0.045px;">Info...</div>
<div style="left:37px;top:548px;width:363px;height:21px;background:#262626;"></div>
<div style="left:37px;top:548px;width:363px;height:1px;background:#202020;"></div>
<div class="t" style="left:74.8px;top:551.70px;font-size:13.7px;line-height:13.7px;color:#b6b6b6;letter-spacing:-0.088px;">Maske</div>
<div style="left:273.7px;top:549.5999999999999px;width:118.5px;height:17.5px;background:#1c1c1c;border:1px solid #2c2c2c;border-radius:2px;"></div>
<div class="t" style="left:278px;top:551.50px;font-size:13.7px;line-height:13.7px;color:#d6d6d6;">Ohne</div>
<svg style="left:377.2px;top:555.8499999999999px;" width="10" height="6" viewBox="0 0 10 6"><path d="M1 1 L5.0 5 L9 1" stroke="#cfcfcf" stroke-width="1.5" fill="none"/></svg>
<div style="left:37px;top:569px;width:363px;height:20px;background:#262626;"></div>
<div style="left:37px;top:569px;width:363px;height:1px;background:#202020;"></div>
<div style="left:274px;top:573.1499999999999px;width:13px;height:13px;background:transparent;border:1.5px solid #b5b5b5;border-radius:1px;"></div>
<div class="t" style="left:289.5px;top:573.05px;font-size:13.7px;line-height:13.7px;color:#b4b4b4;letter-spacing:0.038px;">Alle Masken</div>
<div style="left:37px;top:589px;width:363px;height:21px;background:#262626;"></div>
<div style="left:37px;top:589px;width:363px;height:1px;background:#202020;"></div>
<svg style="left:77px;top:589.1999999999998px;" width="15" height="19" viewBox="0 0 15 19"><circle cx="7.3" cy="10.6" r="6" fill="none" stroke="#bdbdbd" stroke-width="1.45"/><path d="M5 1.9 L9.8 1.9 M7.3 1.9 L7.3 4.6" stroke="#bdbdbd" stroke-width="1.3"/><path d="M1.5 4.2 L2.8 5.5" stroke="#bdbdbd" stroke-width="1.5"/></svg>
<div class="t" style="left:97px;top:592.80px;font-size:13.7px;line-height:13.7px;color:#b6b6b6;letter-spacing:-0.197px;">Farbe</div>
<div style="left:273px;top:591.1999999999998px;width:26.5px;height:17.5px;background:#ff0a0a;border:1.6px solid #a8a8a8;"></div>
<div style="left:304px;top:591.1999999999998px;width:27px;height:17.5px;background:#262626;border:1.6px solid #a8a8a8;"></div>
<svg style="left:306px;top:594.1999999999998px;" width="23" height="11" viewBox="0 0 23 11"><path d="M2 5.5 C5 3.5 9 3.5 13 4.5 L13 6.5 C9 7.5 5 7.5 2 5.5Z" fill="none" stroke="#c8c8c8" stroke-width="1.2"/><rect x="13" y="2.5" width="5" height="6" fill="#c8c8c8"/><rect x="18" y="3.5" width="4" height="4" fill="#c8c8c8"/></svg>
<div style="left:37px;top:610px;width:363px;height:20px;background:#262626;"></div>
<div style="left:37px;top:610px;width:363px;height:1px;background:#202020;"></div>
<svg style="left:77px;top:609.7499999999998px;" width="15" height="19" viewBox="0 0 15 19"><circle cx="7.3" cy="10.6" r="6" fill="none" stroke="#bdbdbd" stroke-width="1.45"/><path d="M5 1.9 L9.8 1.9 M7.3 1.9 L7.3 4.6" stroke="#bdbdbd" stroke-width="1.3"/><path d="M1.5 4.2 L2.8 5.5" stroke="#bdbdbd" stroke-width="1.5"/></svg>
<div style="left:274px;top:614.2499999999998px;width:13px;height:13px;background:transparent;border:1.5px solid #b5b5b5;border-radius:1px;"></div>
<div class="t" style="left:289.5px;top:614.15px;font-size:13.7px;line-height:13.7px;color:#b4b4b4;letter-spacing:0.115px;">Umkehren</div>
<div style="left:37px;top:630px;width:363px;height:21px;background:#262626;"></div>
<div style="left:37px;top:630px;width:363px;height:1px;background:#202020;"></div>
<svg style="left:62px;top:636.2999999999997px;" width="7" height="10" viewBox="0 0 7 10"><path d="M1.2 1 L5.5 5 L1.2 9" stroke="#c4c4c4" stroke-width="1.5" fill="none"/></svg>
<svg style="left:77px;top:630.2999999999997px;" width="15" height="19" viewBox="0 0 15 19"><circle cx="7.3" cy="10.6" r="6" fill="none" stroke="#4e4e4e" stroke-width="1.45"/><path d="M5 1.9 L9.8 1.9 M7.3 1.9 L7.3 4.6" stroke="#4e4e4e" stroke-width="1.3"/><path d="M1.5 4.2 L2.8 5.5" stroke="#4e4e4e" stroke-width="1.5"/></svg>
<div class="t" style="left:97px;top:633.90px;font-size:13.7px;line-height:13.7px;color:#666666;letter-spacing:0.098px;">Weiche Maskenkante (horizontal)</div>
<div style="left:37px;top:651px;width:363px;height:20px;background:#262626;"></div>
<div style="left:37px;top:651px;width:363px;height:1px;background:#202020;"></div>
<svg style="left:62px;top:656.8499999999997px;" width="7" height="10" viewBox="0 0 7 10"><path d="M1.2 1 L5.5 5 L1.2 9" stroke="#c4c4c4" stroke-width="1.5" fill="none"/></svg>
<svg style="left:77px;top:650.8499999999997px;" width="15" height="19" viewBox="0 0 15 19"><circle cx="7.3" cy="10.6" r="6" fill="none" stroke="#4e4e4e" stroke-width="1.45"/><path d="M5 1.9 L9.8 1.9 M7.3 1.9 L7.3 4.6" stroke="#4e4e4e" stroke-width="1.3"/><path d="M1.5 4.2 L2.8 5.5" stroke="#4e4e4e" stroke-width="1.5"/></svg>
<div class="t" style="left:97px;top:654.45px;font-size:13.7px;line-height:13.7px;color:#666666;letter-spacing:0.105px;">Weiche Maskenkante (vertikal)</div>
<div style="left:37px;top:671px;width:363px;height:21px;background:#262626;"></div>
<div style="left:37px;top:671px;width:363px;height:1px;background:#202020;"></div>
<svg style="left:62px;top:677.3999999999996px;" width="7" height="10" viewBox="0 0 7 10"><path d="M1.2 1 L5.5 5 L1.2 9" stroke="#c4c4c4" stroke-width="1.5" fill="none"/></svg>
<svg style="left:77px;top:671.3999999999996px;" width="15" height="19" viewBox="0 0 15 19"><circle cx="7.3" cy="10.6" r="6" fill="none" stroke="#bdbdbd" stroke-width="1.45"/><path d="M5 1.9 L9.8 1.9 M7.3 1.9 L7.3 4.6" stroke="#bdbdbd" stroke-width="1.3"/><path d="M1.5 4.2 L2.8 5.5" stroke="#bdbdbd" stroke-width="1.5"/></svg>
<div class="t" style="left:97px;top:675.00px;font-size:13.7px;line-height:13.7px;color:#b6b6b6;letter-spacing:0.018px;">Deckkraft</div>
<div class="t" style="left:274.3px;top:675.00px;font-size:13.7px;line-height:13.7px;color:#4a9de6;letter-spacing:-0.820px;">100,0</div>
<div class="t" style="left:305.5px;top:675.00px;font-size:13.7px;line-height:13.7px;color:#b4b4b4;">%</div>
<div style="left:37px;top:694px;width:384px;height:1px;background:#1d1d1d;"></div>
<div style="left:425px;top:65px;width:1078px;height:603px;background:#262626;"></div>
<div style="left:1503px;top:65px;width:5px;height:635px;background:#1b1b1b;"></div>
<svg style="left:438px;top:79px;" width="8" height="8" viewBox="0 0 8 8"><path d="M1 1 L7 7 M7 1 L1 7" stroke="#c0c0c0" stroke-width="1.3"/></svg>
<div style="left:457px;top:75px;width:12px;height:12px;background:#bea985;"></div>
<svg style="left:482px;top:74px;" width="11" height="13" viewBox="0 0 11 13"><path d="M3 6 L3 3.5 A2.7 2.7 0 0 1 8.4 3.2" fill="none" stroke="#cfcfcf" stroke-width="1.6"/><rect x="1" y="6" width="9.5" height="6.5" fill="#cfcfcf"/><rect x="5" y="8" width="1.6" height="3" fill="#262626"/></svg>
<div class="t" style="left:501.3px;top:75.10px;font-size:13.7px;line-height:13.7px;color:#b4b4b4;letter-spacing:0.161px;">Komposition</div>
<div class="t" style="left:581.3px;top:75.10px;font-size:13.7px;line-height:13.7px;color:#4a9de6;letter-spacing:-0.615px;">Comp</div>
<svg style="left:626px;top:78px;" width="11" height="10" viewBox="0 0 11 10"><path d="M0 1 L11 1 M0 5 L11 5 M0 9 L11 9" stroke="#c8c8c8" stroke-width="1.5"/></svg>
<div style="left:438px;top:94.5px;width:198px;height:2.2px;background:#dadada;border-radius:1px;"></div>
<div class="t" style="left:680.8px;top:75.10px;font-size:13.7px;line-height:13.7px;color:#b0b0b0;letter-spacing:-0.229px;">Ebene (ohne)</div>
<div class="t" style="left:841.3px;top:75.10px;font-size:13.7px;line-height:13.7px;color:#b0b0b0;letter-spacing:-0.129px;">Footage (ohne)</div>
<div style="left:450px;top:103px;width:71px;height:19px;background:#1b1b1b;border-radius:3px;"></div>
<div class="t" style="left:459.3px;top:105.10px;font-size:13.7px;line-height:13.7px;color:#4a9de6;letter-spacing:-0.263px;">Komp</div>
<svg style="left:511px;top:107px;" width="7" height="11" viewBox="0 0 7 11"><path d="M5.5 1 L1.5 5.5 L5.5 10" stroke="#4a9de6" stroke-width="1.5" fill="none"/></svg>
<div class="t" style="left:534px;top:105.10px;font-size:13.7px;line-height:13.7px;color:#b8b8b8;letter-spacing:-0.045px;">Drip Animated</div>
<div style="left:425px;top:128px;width:1078px;height:540px;background:#000;"></div>
<svg style="left:425px;top:128px;" width="1078" height="540" viewBox="0 0 1078 540"><g stroke="#2f6a2c" stroke-width="1.5" fill="none">
<path d="M253 133 L122.6 169.8 L159.9 301.2"/>
<path d="M879.4 0 L904 87.4"/>
<path d="M949.3 244.8 L987 376.3 L856.4 413.3"/>
<path d="M204.9 459.3 L226.4 533.5"/>
</g>
<path d="M585 161 C595 152 599 142 602 130 C606 117 620 110 633 110 C643 111 645 120 641 128 C635 138 625 147 615 154 C605 159 595 160 585 161 Z" fill="#ff0000"/>
<path d="M554 293 C558 293 561 296 560 302 C559 310 560 318 562 327 C558 319 553 311 550 303 C548 297 550 293 554 293 Z" fill="#ff0000"/></svg>
<div style="left:425px;top:668px;width:1078px;height:28px;background:#262626;"></div>
<div style="left:425px;top:696px;width:1078px;height:4px;background:#1b1b1b;"></div>
<svg style="left:432px;top:675px;" width="18" height="14" viewBox="0 0 18 14"><rect x="1" y="1" width="11" height="9" rx="1" fill="#c4c4c4"/><path d="M5 3 L9 5.5 L5 8Z" fill="#262626"/><path d="M13.5 4 L13.5 11.5 L4 11.5 M16 6 L16 13.5 L6 13.5" stroke="#c4c4c4" stroke-width="1.3" fill="none"/></svg>
<svg style="left:458px;top:675px;" width="17" height="14" viewBox="0 0 17 14"><rect x="1" y="1" width="15" height="9.5" fill="none" stroke="#c4c4c4" stroke-width="1.5"/><path d="M8.5 10.5 L8.5 12.5 M4 13 L13 13" stroke="#c4c4c4" stroke-width="1.5"/></svg>
<svg style="left:482px;top:674px;" width="22" height="17" viewBox="0 0 22 17"><path d="M2 2 L20 2 L20 8 C20 11 17 12 15 10 L11 7.5 L7 10 C5 12 2 11 2 8 Z" fill="#c4c4c4"/><circle cx="7" cy="6" r="2" fill="#262626"/><circle cx="15" cy="6" r="2" fill="#262626"/><path d="M7 13 L13 13 L10 16Z" fill="#c4c4c4"/></svg>
<div style="left:508px;top:672px;width:82px;height:20px;background:#1e1e1e;border-radius:3px;"></div>
<div class="t" style="left:515px;top:675.60px;font-size:13.7px;line-height:13.7px;color:#d6d6d6;letter-spacing:-0.679px;">200%</div>
<svg style="left:575px;top:680px;" width="10" height="6" viewBox="0 0 10 6"><path d="M1 1 L5.0 5 L9 1" stroke="#cfcfcf" stroke-width="1.5" fill="none"/></svg>
<svg style="left:594px;top:673px;" width="20" height="19" viewBox="0 0 20 19"><rect x="2" y="2" width="15" height="10" fill="none" stroke="#c4c4c4" stroke-width="1.5"/><path d="M9.5 0 L9.5 4 M9.5 10 L9.5 14 M0 7 L4 7 M15 7 L19 7" stroke="#c4c4c4" stroke-width="1.5"/><circle cx="9.5" cy="7" r="1" fill="#c4c4c4"/><path d="M14 15 L19 15 L16.5 18Z" fill="#c4c4c4"/></svg>
<div style="left:619px;top:672px;width:24px;height:22px;background:#1c1c1c;border-radius:2px;"></div>
<svg style="left:621px;top:674px;" width="20" height="16" viewBox="0 0 20 16"><path d="M5 2 L16 2 L16 14 L2 14 L2 6 Z" fill="none" stroke="#3f8fe3" stroke-width="1.6"/><circle cx="5" cy="2.5" r="1.4" fill="#3f8fe3"/><circle cx="16" cy="2.5" r="1.4" fill="#3f8fe3"/><circle cx="16" cy="14" r="1.4" fill="#3f8fe3"/><circle cx="2" cy="14" r="1.4" fill="#3f8fe3"/></svg>
<div style="left:646px;top:672px;width:82px;height:20px;background:#1e1e1e;border-radius:3px;"></div>
<div class="t" style="left:655.8px;top:675.60px;font-size:13.7px;line-height:13.7px;color:#bdbdbd;letter-spacing:-0.306px;">0:00:02:04</div>
<svg style="left:732px;top:675px;" width="20" height="15" viewBox="0 0 20 15"><path d="M1 3.5 L6 3.5 L7.5 1 L12.5 1 L14 3.5 L19 3.5 L19 14 L1 14Z" fill="#c4c4c4"/><circle cx="10" cy="8.5" r="3.5" fill="#262626"/><circle cx="10" cy="8.5" r="1.8" fill="#c4c4c4"/></svg>
<svg style="left:759px;top:674px;" width="19" height="16" viewBox="0 0 19 16"><circle cx="12" cy="5" r="4" fill="none" stroke="#4a4a4a" stroke-width="1.5"/><path d="M1 10 C4 5 11 5 14 10 C11 15 4 15 1 10Z" fill="none" stroke="#4a4a4a" stroke-width="1.5"/></svg>
<svg style="left:786px;top:673px;" width="19" height="20" viewBox="0 0 19 20"><circle cx="9.5" cy="5.5" r="3.8" fill="#e52020"/><circle cx="6" cy="11" r="3.8" fill="#22b33a"/><circle cx="13" cy="11" r="3.8" fill="#3a72e0"/><path d="M9 16 L14 16 L11.5 19Z" fill="#d0d0d0"/></svg>
<div style="left:810px;top:672px;width:104px;height:20px;background:#1e1e1e;border-radius:3px;"></div>
<div class="t" style="left:818.3px;top:675.90px;font-size:13.7px;line-height:13.7px;color:#d6d6d6;letter-spacing:0.304px;">Voll</div>
<svg style="left:899px;top:680px;" width="10" height="6" viewBox="0 0 10 6"><path d="M1 1 L5.0 5 L9 1" stroke="#cfcfcf" stroke-width="1.5" fill="none"/></svg>
<svg style="left:920px;top:674px;" width="19" height="16" viewBox="0 0 19 16"><rect x="1" y="1" width="17" height="14" fill="none" stroke="#c4c4c4" stroke-width="1.5"/><rect x="4.5" y="5" width="10" height="6" fill="#c4c4c4"/></svg>
<svg style="left:947px;top:674px;" width="19" height="16" viewBox="0 0 19 16"><rect x="1" y="1" width="17" height="14" fill="none" stroke="#c4c4c4" stroke-width="1.5"/><path d="M3 3h3v3h-3z M9 3h3v3h-3z M6 6h3v3h-3z M12 6h3v3h-3z M3 9h3v3h-3z M9 9h3v3h-3z" fill="#7a7a7a"/></svg>
<div style="left:971px;top:672px;width:127px;height:20px;background:#1e1e1e;border-radius:3px;"></div>
<div class="t" style="left:978px;top:675.90px;font-size:13.7px;line-height:13.7px;color:#d6d6d6;letter-spacing:-0.340px;">Aktive Kamera</div>
<svg style="left:1083px;top:680px;" width="10" height="6" viewBox="0 0 10 6"><path d="M1 1 L5.0 5 L9 1" stroke="#cfcfcf" stroke-width="1.5" fill="none"/></svg>
<div style="left:1104px;top:672px;width:84px;height:20px;background:#1e1e1e;border-radius:3px;"></div>
<div class="t" style="left:1111.7px;top:675.90px;font-size:13.7px;line-height:13.7px;color:#d6d6d6;letter-spacing:0.051px;">1 Ansicht</div>
<svg style="left:1172px;top:680px;" width="10" height="6" viewBox="0 0 10 6"><path d="M1 1 L5.0 5 L9 1" stroke="#cfcfcf" stroke-width="1.5" fill="none"/></svg>
<svg style="left:1193px;top:674px;" width="20" height="16" viewBox="0 0 20 16"><path d="M1 3 L19 3 M1 3 L4 0.5 M1 3 L4 5.5 M19 3 L16 0.5 M19 3 L16 5.5" stroke="#c4c4c4" stroke-width="1.5" fill="none"/><path d="M1 1 L1 5 M19 1 L19 5" stroke="#c4c4c4" stroke-width="1.3"/><rect x="5" y="8.5" width="10" height="6.5" fill="none" stroke="#c4c4c4" stroke-width="1.5"/></svg>
<div style="left:1216px;top:672px;width:26px;height:22px;background:#1c1c1c;border-radius:2px;"></div>
<svg style="left:1220px;top:674px;" width="19" height="17" viewBox="0 0 19 17"><path d="M12 14 L1.5 14 L1.5 1.5 L17 1.5 L17 9" stroke="#c4c4c4" stroke-width="1.5" fill="none"/><path d="M10 3 L6 8.5 L9 8.5 L7 12.5 L12 7 L9 7 Z" fill="#c4c4c4"/><path d="M13 12 L18 12 L15.5 15Z" fill="#c4c4c4"/></svg>
<svg style="left:1247px;top:674px;" width="18" height="16" viewBox="0 0 18 16"><path d="M1.5 6 L1.5 14.5 L16.5 14.5 L16.5 6 M5.5 9 L5.5 14.5 M9 5 L9 14.5 M12.5 9 L12.5 14.5" stroke="#c4c4c4" stroke-width="1.5" fill="none"/><rect x="6.5" y="1" width="5" height="4" fill="#c4c4c4"/></svg>
<svg style="left:1272px;top:673px;" width="20" height="18" viewBox="0 0 20 18"><rect x="7" y="1" width="6" height="5" fill="#c4c4c4"/><path d="M10 6 L10 9 M3.5 12 L3.5 9 L16.5 9 L16.5 12" stroke="#c4c4c4" stroke-width="1.5" fill="none"/><rect x="0.5" y="12" width="6" height="5" fill="#c4c4c4"/><rect x="13.5" y="12" width="6" height="5" fill="#c4c4c4"/></svg>
<div style="left:1296px;top:671px;width:1px;height:24px;background:#222;"></div>
<svg style="left:1303px;top:673px;" width="17" height="17" viewBox="0 0 17 17"><circle cx="8.5" cy="8.5" r="7.5" fill="#c4c4c4"/><circle cx="8.5" cy="8.5" r="3.2" fill="#262626"/><path d="M8.5 1 L10 5.5 M16 8.5 L11.5 10 M8.5 16 L7 11.5 M1 8.5 L5.5 7 M3.2 3.2 L6.5 6 M13.8 3.2 L11 6.5 M13.8 13.8 L10.5 11 M3.2 13.8 L6 10.5" stroke="#262626" stroke-width="1.2"/></svg>
<div class="t" style="left:1327px;top:675.90px;font-size:13.7px;line-height:13.7px;color:#4a9de6;letter-spacing:-0.348px;">+0,0</div>
<div style="left:1508px;top:65px;width:250.5px;height:630px;background:#262626;"></div>
<div style="left:1752px;top:124px;width:6px;height:571px;background:#252525;"></div>
<div class="t" style="left:1523px;top:75.40px;font-size:13.7px;line-height:13.7px;color:#d6d6d6;letter-spacing:0.050px;">Info</div>
<svg style="left:1733px;top:78px;" width="11" height="10" viewBox="0 0 11 10"><path d="M0 1 L11 1 M0 5 L11 5 M0 9 L11 9" stroke="#c8c8c8" stroke-width="1.5"/></svg>
<div style="left:1518px;top:120px;width:24px;height:24px;background:#000;"></div>
<div class="t" style="left:1548.3px;top:105.80px;font-size:13.7px;line-height:13.7px;color:#c2c2c2;">R</div>
<div class="t" style="left:1561.5px;top:105.80px;font-size:13.7px;line-height:13.7px;color:#c2c2c2;">:</div>
<div class="t" style="left:1548.3px;top:121.70px;font-size:13.7px;line-height:13.7px;color:#c2c2c2;">G</div>
<div class="t" style="left:1561.5px;top:121.70px;font-size:13.7px;line-height:13.7px;color:#c2c2c2;">:</div>
<div class="t" style="left:1550px;top:137.10px;font-size:13.7px;line-height:13.7px;color:#c2c2c2;">B</div>
<div class="t" style="left:1561.5px;top:137.10px;font-size:13.7px;line-height:13.7px;color:#c2c2c2;">:</div>
<div class="t" style="left:1548.3px;top:154.20px;font-size:13.7px;line-height:13.7px;color:#c2c2c2;">A</div>
<div class="t" style="left:1561.5px;top:154.20px;font-size:13.7px;line-height:13.7px;color:#c2c2c2;">:</div>
<div class="t" style="left:1572px;top:154.20px;font-size:13.7px;line-height:13.7px;color:#c2c2c2;">0</div>
<div style="left:1631px;top:105px;width:1px;height:63px;background:#2e2e2e;"></div>
<svg style="left:1643px;top:133px;" width="12" height="12" viewBox="0 0 12 12"><path d="M6 0 L6 12 M0 6 L12 6" stroke="#c8c8c8" stroke-width="1.3"/></svg>
<div class="t" style="left:1657.8px;top:105.80px;font-size:13.7px;line-height:13.7px;color:#c2c2c2;">X</div>
<div class="t" style="left:1669px;top:105.80px;font-size:13.7px;line-height:13.7px;color:#c2c2c2;">:</div>
<div class="t" style="left:1677.6px;top:105.80px;font-size:13.7px;line-height:13.7px;color:#c2c2c2;letter-spacing:-0.678px;">625</div>
<div class="t" style="left:1658px;top:121.70px;font-size:13.7px;line-height:13.7px;color:#c2c2c2;">Y</div>
<div class="t" style="left:1669px;top:121.70px;font-size:13.7px;line-height:13.7px;color:#c2c2c2;">:</div>
<div class="t" style="left:1680.5px;top:121.70px;font-size:13.7px;line-height:13.7px;color:#c2c2c2;letter-spacing:-0.928px;">125</div>
<div style="left:1517px;top:177px;width:230px;height:1px;background:#2c2c2c;"></div>
<div style="left:1510px;top:224px;width:246px;height:1px;background:#202020;"></div>
<div style="left:1510px;top:259px;width:246px;height:2px;background:#1a1a1a;"></div>
<div style="left:1510px;top:295px;width:246px;height:2px;background:#1a1a1a;"></div>
<div class="t" style="left:1523.3px;top:236.20px;font-size:13.7px;line-height:13.7px;color:#b8b8b8;letter-spacing:-0.017px;">Vorschau</div>
<div class="t" style="left:1523.3px;top:272.60px;font-size:13.7px;line-height:13.7px;color:#b8b8b8;letter-spacing:-0.080px;">Effekte und Vorgaben</div>
<div style="left:35px;top:696px;width:1735px;height:5px;background:#1b1b1b;"></div>
<div style="left:35px;top:701px;width:1735px;height:339px;background:#282828;"></div>
<div style="left:35px;top:1040px;width:1735px;height:6px;background:#202020;"></div>
<div style="left:35px;top:701.5px;width:1736px;height:1.5px;background:#5584bf;"></div>
<div style="left:35px;top:701.5px;width:1.4px;height:338.5px;background:#4a7ab3;"></div>
<svg style="left:47px;top:716px;" width="7" height="7" viewBox="0 0 7 7"><path d="M0.5 0.5 L6.5 6.5 M6.5 0.5 L0.5 6.5" stroke="#c0c0c0" stroke-width="1.2"/></svg>
<div style="left:65px;top:711px;width:13px;height:12px;background:#bea985;"></div>
<div class="t" style="left:90.2px;top:711.20px;font-size:13.7px;line-height:13.7px;color:#d0d0d0;letter-spacing:-0.263px;">Komp</div>
<svg style="left:137px;top:714px;" width="11" height="10" viewBox="0 0 11 10"><path d="M0 1 L11 1 M0 5 L11 5 M0 9 L11 9" stroke="#c8c8c8" stroke-width="1.5"/></svg>
<div class="t" style="left:52px;top:740.36px;font-size:18px;line-height:18px;color:#3d9be9;font-weight:bold;letter-spacing:0.105px;">0:00:02:04</div>
<div class="t" style="left:48px;top:760.29px;font-size:12.3px;line-height:12.3px;color:#2d79c0;letter-spacing:-0.192px;">00052 (23.976 fps)</div>
<div style="left:162px;top:745px;width:677px;height:21px;background:#171717;border-radius:4px;"></div>
<svg style="left:169px;top:747px;" width="24" height="17" viewBox="0 0 24 17"><circle cx="10" cy="6" r="4.5" fill="none" stroke="#cfcfcf" stroke-width="1.5"/><path d="M6.8 9.2 L1.5 14.5" stroke="#cfcfcf" stroke-width="1.6"/><path d="M15 10 L21 10 L18 13Z" fill="#cfcfcf"/></svg>
<svg style="left:857px;top:745px;" width="22" height="21" viewBox="0 0 22 21"><path d="M1 5 L17 5 M10 5 L10 12 L17 12" stroke="#c6c6c6" stroke-width="1.5" fill="none"/><rect x="2.5" y="3" width="4" height="4" fill="#c6c6c6"/><rect x="13" y="2.5" width="6" height="5" fill="#c6c6c6"/><rect x="13" y="9.5" width="6" height="5" fill="#c6c6c6"/><path d="M14 17 L20 17 L17 20Z" fill="#c6c6c6"/></svg>
<svg style="left:897px;top:745px;" width="23" height="21" viewBox="0 0 23 21"><path d="M5 0 L6 4 L10 3 L7 6 L10 9 L6 8 L5 12 L4 8 L0 9 L3 6 L0 3 L4 4Z" fill="#c6c6c6"/><path d="M14 8 L21 11.5 L21 18.5 L14 21 L8 18.5 L8 11.5 Z M8 11.5 L14 14.5 L21 11.5 M14 14.5 L14 21" stroke="#c6c6c6" stroke-width="1.5" fill="none"/></svg>
<svg style="left:939px;top:745px;" width="22" height="20" viewBox="0 0 22 20"><path d="M3 10 C3 1 19 1 19 10 Z" fill="#c6c6c6"/><path d="M1 9 L21 9" stroke="#c6c6c6" stroke-width="1.3"/><circle cx="8" cy="6.5" r="1.3" fill="#282828"/><circle cx="14" cy="6.5" r="1.3" fill="#282828"/><rect x="1" y="12" width="20" height="7" fill="#8a8a8a"/><path d="M9.5 9 L9.5 15 A1.5 1.5 0 0 0 12.5 15 L12.5 9Z" fill="#c6c6c6"/></svg>
<svg style="left:972px;top:745px;" width="20" height="21" viewBox="0 0 20 21"><rect x="1" y="6" width="10" height="14" fill="none" stroke="#3a8fe6" stroke-width="1.6"/><rect x="6" y="1" width="13" height="15" fill="#3a8fe6"/><rect x="8.5" y="3" width="8" height="11" fill="#2a6db5"/><path d="M7 3v1 M7 6v1 M7 9v1 M7 12v1 M18 3v1 M18 6v1 M18 9v1 M18 12v1" stroke="#1a3a5a" stroke-width="1"/><path d="M10.5 8.5 L14.5 8.5" stroke="#1a3a5a" stroke-width="1.2"/></svg>
<svg style="left:1003px;top:745px;" width="21" height="21" viewBox="0 0 21 21"><circle cx="7.5" cy="13.5" r="6" fill="#282828" stroke="#c6c6c6" stroke-width="1.5"/><circle cx="10" cy="11" r="6" fill="#282828" stroke="#c6c6c6" stroke-width="1.5"/><circle cx="13" cy="8" r="6.2" fill="#7c7c7c" stroke="#c6c6c6" stroke-width="1.5"/></svg>
<svg style="left:1044px;top:745px;" width="21" height="20" viewBox="0 0 21 20"><path d="M3 3 L18 3 L18 18 L3 18 Z" stroke="#c6c6c6" stroke-width="1.5" fill="none"/><path d="M2 1 L2 4 M6 1 L6 4 M10 1 L10 4 M14 1 L14 4" stroke="#c6c6c6" stroke-width="1.2"/><path d="M3 8 C8 8 10 15 17 15" stroke="#c6c6c6" stroke-width="1.5" fill="none"/></svg>
<div style="left:36px;top:777px;width:1047px;height:2px;background:#161616;"></div>
<div style="left:36px;top:779px;width:1047px;height:21px;background:#2b2b2b;"></div>
<div style="left:36px;top:800px;width:1047px;height:2px;background:#181818;"></div>
<div style="left:36px;top:802px;width:1047px;height:17px;background:#292929;"></div>
<svg style="left:41px;top:785px;" width="15" height="10" viewBox="0 0 15 10"><path d="M0.5 5 C4 -0.5 11 -0.5 14.5 5 C11 10.5 4 10.5 0.5 5Z" fill="#c6c6c6"/><circle cx="7.5" cy="5" r="2.4" fill="#2b2b2b"/></svg>
<svg style="left:59px;top:782px;" width="16" height="16" viewBox="0 0 16 16"><path d="M1 5 L4 5 L8 1 L8 15 L4 11 L1 11Z" fill="#c6c6c6"/><path d="M10 4.5 A4 4 0 0 1 10 11.5 M12 2 A7 7 0 0 1 12 14" stroke="#c6c6c6" stroke-width="1.5" fill="none"/></svg>
<svg style="left:80px;top:786px;" width="10" height="10" viewBox="0 0 10 10"><circle cx="5" cy="5" r="4.5" fill="#c6c6c6"/></svg>
<svg style="left:97px;top:782px;" width="12" height="14" viewBox="0 0 12 14"><path d="M3 6 L3 4 A3 3 0 0 1 9 4 L9 6" stroke="#c6c6c6" stroke-width="1.6" fill="none"/><rect x="1" y="6" width="10" height="8" rx="1" fill="#c6c6c6"/><circle cx="6" cy="9.5" r="1.2" fill="#2b2b2b"/><rect x="5.4" y="9.5" width="1.2" height="2.5" fill="#2b2b2b"/></svg>
<div style="left:117px;top:783px;width:1.5px;height:14px;background:#1a1a1a;"></div>
<svg style="left:133px;top:782px;" width="16" height="16" viewBox="0 0 16 16"><path d="M1 1 L8 1 L15 8 L8 15 L1 8Z" fill="#c6c6c6"/><circle cx="4.5" cy="4.5" r="1.3" fill="#2b2b2b"/></svg>
<div style="left:155.6px;top:783px;width:1.5px;height:14px;background:#1a1a1a;"></div>
<div style="left:195.6px;top:783px;width:1.5px;height:14px;background:#1a1a1a;"></div>
<div style="left:392px;top:783px;width:1.5px;height:14px;background:#1a1a1a;"></div>
<div class="t" style="left:161.7px;top:784.55px;font-size:11.4px;line-height:11.4px;color:#9a9a9a;letter-spacing:1.466px;">Nr.</div>
<div class="t" style="left:202px;top:784.55px;font-size:11.4px;line-height:11.4px;color:#9a9a9a;letter-spacing:-0.125px;">Ebenenname</div>
<svg style="left:397px;top:782px;" width="17" height="15" viewBox="0 0 17 15"><path d="M3 7 C3 0 14 0 14 7Z" fill="#c6c6c6"/><rect x="7.3" y="6" width="2.4" height="7" fill="#c6c6c6"/><path d="M0 11 L5 11 M12 11 L17 11" stroke="#c6c6c6" stroke-width="1.3"/><path d="M5.5 7 L5.5 5 M11.5 7 L11.5 5" stroke="#2b2b2b" stroke-width="1"/></svg>
<svg style="left:418px;top:784px;" width="13" height="13" viewBox="0 0 13 13"><circle cx="6.5" cy="6.5" r="2.5" fill="none" stroke="#c6c6c6" stroke-width="1.3"/><path d="M6.5 0 L6.5 3 M6.5 10 L6.5 13 M0 6.5 L3 6.5 M10 6.5 L13 6.5 M2 2 L4 4 M9 9 L11 11 M11 2 L9 4 M2 11 L4 9" stroke="#c6c6c6" stroke-width="1.2"/></svg>
<svg style="left:435px;top:782px;" width="13" height="15" viewBox="0 0 13 15"><path d="M1 1 L12 14" stroke="#c6c6c6" stroke-width="2" stroke-dasharray="1.6 1.2"/></svg>
<div class="t" style="left:453px;top:784.30px;font-size:15px;line-height:15px;color:#c6c6c6;font-style:italic;font-family:"Liberation Serif",serif;">fx</div>
<svg style="left:470px;top:782px;" width="16" height="15" viewBox="0 0 16 15"><rect x="2.5" y="0.5" width="13" height="11" fill="none" stroke="#c6c6c6" stroke-width="1.2"/><rect x="5" y="3" width="8" height="6" fill="#c6c6c6"/><path d="M0.8 2.5 L0.8 14 L13 14" stroke="#c6c6c6" stroke-width="1.2" fill="none"/></svg>
<svg style="left:488px;top:781px;" width="17" height="17" viewBox="0 0 17 17"><circle cx="6" cy="11" r="5" fill="#2b2b2b" stroke="#c6c6c6" stroke-width="1.3"/><circle cx="8.5" cy="8.5" r="5" fill="#2b2b2b" stroke="#c6c6c6" stroke-width="1.3"/><circle cx="11" cy="6" r="5.2" fill="#7a7a7a" stroke="#c6c6c6" stroke-width="1.3"/></svg>
<svg style="left:508px;top:783px;" width="14" height="14" viewBox="0 0 14 14"><circle cx="7" cy="7" r="6" fill="none" stroke="#c6c6c6" stroke-width="1.5"/><path d="M7 1 A6 6 0 0 1 7 13 Z" fill="#c6c6c6" transform="rotate(45 7 7)"/></svg>
<svg style="left:525px;top:782px;" width="15" height="16" viewBox="0 0 15 16"><path d="M7.5 1 L14 4.5 L14 11.5 L7.5 15 L1 11.5 L1 4.5 Z M1 4.5 L7.5 8 L14 4.5 M7.5 8 L7.5 15" stroke="#c6c6c6" stroke-width="1.3" fill="none"/></svg>
<div style="left:558.3px;top:783px;width:1.5px;height:14px;background:#1a1a1a;"></div>
<div class="t" style="left:565px;top:784.55px;font-size:11.4px;line-height:11.4px;color:#9a9a9a;letter-spacing:-0.005px;">Modus</div>
<div class="t" style="left:697.5px;top:784.55px;font-size:11.4px;line-height:11.4px;color:#9a9a9a;">T</div>
<div class="t" style="left:717.5px;top:784.55px;font-size:11.4px;line-height:11.4px;color:#9a9a9a;letter-spacing:-0.447px;">.BewMas</div>
<div style="left:849.2px;top:783px;width:1.5px;height:14px;background:#1a1a1a;"></div>
<div class="t" style="left:855.6px;top:784.55px;font-size:11.4px;line-height:11.4px;color:#9a9a9a;letter-spacing:0.161px;">Übergeordnet und verknüpft</div>
<div style="left:1016.2px;top:783px;width:1.5px;height:14px;background:#1a1a1a;"></div>
<div class="t" style="left:1025.6px;top:784.55px;font-size:11.4px;line-height:11.4px;color:#9a9a9a;letter-spacing:-0.013px;">Dehnung</div>
<div style="left:40px;top:803px;width:16px;height:15px;background:#1d1d1d;"></div>
<svg style="left:41px;top:806px;" width="15" height="10" viewBox="0 0 15 10"><path d="M0.5 5 C4 -0.5 11 -0.5 14.5 5 C11 10.5 4 10.5 0.5 5Z" fill="#c6c6c6"/><circle cx="7.5" cy="5" r="2.4" fill="#1d1d1d"/></svg>
<div style="left:77px;top:803px;width:15px;height:15px;background:#232323;"></div>
<div style="left:95px;top:803px;width:15px;height:15px;background:#232323;"></div>
<svg style="left:124px;top:806px;" width="7" height="10" viewBox="0 0 7 10"><path d="M1.2 1 L5.5 5 L1.2 9" stroke="#c0c0c0" stroke-width="1.5" fill="none"/></svg>
<div style="left:138px;top:804px;width:15px;height:14.5px;background:#45b04e;"></div>
<div class="t" style="left:164px;top:803.90px;font-size:13.7px;line-height:13.7px;color:#b8b8b8;">1</div>
<svg style="left:197px;top:804px;" width="20" height="16" viewBox="0 0 20 16"><rect x="0.5" y="0.5" width="19" height="15" fill="#c8c8c8"/><rect x="3" y="2.5" width="14" height="11" fill="#2a2a2a"/><path d="M1 3h1.5 M1 6h1.5 M1 9h1.5 M1 12h1.5 M17.5 3h1.5 M17.5 6h1.5 M17.5 9h1.5 M17.5 12h1.5" stroke="#2a2a2a"/><circle cx="7.5" cy="6" r="2.5" fill="#3a8fe6"/><path d="M6 13 L9 8 L12 13Z" fill="#2aa040"/><rect x="10" y="5" width="5" height="5" fill="#e03030"/></svg>
<div class="t" style="left:221.7px;top:804.16px;font-size:13.4px;line-height:13.4px;color:#c2c2c2;font-weight:bold;letter-spacing:-0.000px;">[Drip Animated]</div>
<svg style="left:397px;top:803px;" width="17" height="15" viewBox="0 0 17 15"><path d="M3 7 C3 0 14 0 14 7Z" fill="#c6c6c6"/><rect x="7.3" y="6" width="2.4" height="7" fill="#c6c6c6"/><path d="M0 11 L5 11 M12 11 L17 11" stroke="#c6c6c6" stroke-width="1.3"/><path d="M5.5 7 L5.5 5 M11.5 7 L11.5 5" stroke="#292929" stroke-width="1"/></svg>
<div style="left:416px;top:803px;width:15px;height:15px;background:#232323;"></div>
<svg style="left:435px;top:804px;" width="14" height="14" viewBox="0 0 14 14"><path d="M1.5 12.5 L12.5 1.5" stroke="#c6c6c6" stroke-width="1.6"/></svg>
<div class="t" style="left:453px;top:804.30px;font-size:15px;line-height:15px;color:#c6c6c6;font-style:italic;font-family:"Liberation Serif",serif;">fx</div>
<div style="left:488px;top:803px;width:15px;height:15px;background:#252525;"></div>
<div style="left:507px;top:803px;width:15px;height:15px;background:#252525;"></div>
<div style="left:525px;top:803px;width:15px;height:15px;background:#252525;"></div>
<div style="left:562.5px;top:802.5px;width:124px;height:16px;background:#1b1b1b;border-radius:2px;"></div>
<div class="t" style="left:569.7px;top:803.90px;font-size:13.7px;line-height:13.7px;color:#d8d8d8;letter-spacing:-0.030px;">Normal</div>
<svg style="left:671.5px;top:807.5px;" width="10" height="6" viewBox="0 0 10 6"><path d="M1 1 L5.0 5 L9 1" stroke="#d0d0d0" stroke-width="1.5" fill="none"/></svg>
<div style="left:692.5px;top:803px;width:16px;height:15px;background:#232323;"></div>
<svg style="left:854px;top:803px;" width="17" height="16" viewBox="0 0 17 16"><path d="M8.5 8 a1.5 1.5 0 0 1 3 0 a3 3 0 0 1 -6 0 a4.5 4.5 0 0 1 9 0 a6 6 0 0 1 -12 0" stroke="#c6c6c6" stroke-width="1.4" fill="none"/></svg>
<div style="left:878px;top:802.5px;width:106.5px;height:16px;background:#1b1b1b;border-radius:2px;"></div>
<div class="t" style="left:886px;top:804.60px;font-size:13.7px;line-height:13.7px;color:#d8d8d8;letter-spacing:-0.171px;">Ohne</div>
<svg style="left:969px;top:807.5px;" width="10" height="6" viewBox="0 0 10 6"><path d="M1 1 L5.0 5 L9 1" stroke="#d0d0d0" stroke-width="1.5" fill="none"/></svg>
<div class="t" style="left:1025.6px;top:804.60px;font-size:13.7px;line-height:13.7px;color:#4a9de6;letter-spacing:-0.861px;">90,0%</div>
<div style="left:1084px;top:740px;width:685px;height:300px;background:#272727;"></div>
<div style="left:1083px;top:740px;width:1.2px;height:300px;background:#050505;"></div>
<div style="left:1084.5px;top:821px;width:2px;height:219px;background:#2c2c2c;"></div>
<div style="left:1084px;top:740.5px;width:668px;height:12.5px;background:#141414;"></div>
<div style="left:1092.8px;top:742.2px;width:649px;height:9.5px;background:#7a7a7a;"></div>
<svg style="left:1084px;top:742px;" width="9" height="10" viewBox="0 0 9 10"><path d="M9 0 L9 10 L5 10 A5 5 0 0 1 5 0Z" fill="#3a8ee6"/></svg>
<svg style="left:1742px;top:742px;" width="9" height="10" viewBox="0 0 9 10"><path d="M0 0 L0 10 L4 10 A5 5 0 0 0 4 0Z" fill="#3a8ee6"/></svg>
<div style="left:1450px;top:742px;width:4px;height:10px;background:#6f9fd6;"></div>
<div style="left:1093px;top:768px;width:1px;height:8px;background:#bcbcbc;"></div>
<div style="left:1176px;top:771px;width:1px;height:8px;background:#bcbcbc;"></div>
<div style="left:1258px;top:768px;width:1px;height:8px;background:#bcbcbc;"></div>
<div style="left:1341px;top:771px;width:1px;height:8px;background:#bcbcbc;"></div>
<div style="left:1424px;top:768px;width:1px;height:8px;background:#bcbcbc;"></div>
<div style="left:1507px;top:771px;width:1px;height:8px;background:#bcbcbc;"></div>
<div style="left:1590px;top:768px;width:1px;height:8px;background:#bcbcbc;"></div>
<div style="left:1672px;top:771px;width:1px;height:8px;background:#bcbcbc;"></div>
<div style="left:1084px;top:750px;width:60px;height:20px;overflow:hidden">
<div class="t" style="left:-6.044531250000091px;top:5.94px;font-size:12px;line-height:12px;color:#c4c4c4;">00:00f</div>
</div>
<div class="t" style="left:1159.4187499999998px;top:755.94px;font-size:12px;line-height:12px;color:#c4c4c4;">00:12f</div>
<div class="t" style="left:1242.2187499999998px;top:755.94px;font-size:12px;line-height:12px;color:#c4c4c4;">01:00f</div>
<div class="t" style="left:1325.0187499999997px;top:755.94px;font-size:12px;line-height:12px;color:#c4c4c4;">01:12f</div>
<div class="t" style="left:1407.81875px;top:755.94px;font-size:12px;line-height:12px;color:#c4c4c4;">02:00f</div>
<div class="t" style="left:1490.6187499999999px;top:755.94px;font-size:12px;line-height:12px;color:#c4c4c4;">02:12f</div>
<div class="t" style="left:1573.4187499999998px;top:755.94px;font-size:12px;line-height:12px;color:#c4c4c4;">03:00f</div>
<div class="t" style="left:1656.21875px;top:755.94px;font-size:12px;line-height:12px;color:#c4c4c4;">03:12f</div>
<div style="left:1700px;top:750px;width:50.5px;height:20px;overflow:hidden">
<div class="t" style="left:39.01874999999973px;top:5.94px;font-size:12px;line-height:12px;color:#c4c4c4;">04:00f</div>
</div>
<div style="left:1084px;top:775.6px;width:668px;height:21px;background:#111111;"></div>
<div style="left:1092.5px;top:777.2px;width:649.5px;height:18.4px;background:#6b6b6b;"></div>
<svg style="left:1084px;top:777px;" width="9" height="19" viewBox="0 0 9 19"><path d="M9 0 L9 19 L5 19 A5 5 0 0 1 0 14 L0 5 A5 5 0 0 1 5 0Z" fill="#3a8ee6"/></svg>
<svg style="left:1742px;top:777px;" width="8" height="19" viewBox="0 0 8 19"><path d="M0 0 L0 19 L3 19 A5 5 0 0 0 8 14 L8 5 A5 5 0 0 0 3 0Z" fill="#3a8ee6"/></svg>
<svg style="left:1754px;top:780px;" width="15" height="17" viewBox="0 0 15 17"><path d="M1 1 L14 1 L14 11 L7.5 16.5 L1 11Z" fill="#c4c4c4"/></svg>
<div style="left:1084px;top:797px;width:686px;height:4px;background:#1a1a1a;"></div>
<div style="left:1092.5px;top:801px;width:649.5px;height:239px;background:#363636;"></div>
<div style="left:1092.5px;top:801px;width:89px;height:20px;background:#3a3a3a;"></div>
<div style="left:1181.7px;top:801.7px;width:560px;height:19px;background:#477247;"></div>
<div style="left:1741.7px;top:801.7px;width:8.5px;height:19px;background:#3d553d;"></div>
<svg style="left:1182px;top:802px;" width="5" height="5" viewBox="0 0 5 5"><path d="M0 0 L4.5 0 L0 4.5Z" fill="#2a422a"/></svg>
<div style="left:1092.5px;top:821px;width:649.5px;height:2px;background:#2f2f2f;"></div>
<div style="left:1750px;top:821px;width:20px;height:219px;background:#282828;"></div>
<svg style="left:1754px;top:803px;" width="16" height="17" viewBox="0 0 16 17"><path d="M9 2 L1.5 11 L9 11" stroke="#d0d0d0" stroke-width="1.5" fill="none"/><rect x="9" y="5" width="7" height="7" fill="#c8c8c8"/><circle cx="9" cy="12" r="3.5" fill="#282828" stroke="#d0d0d0" stroke-width="1.4"/></svg>
<div style="left:1769px;top:701px;width:1.5px;height:339px;background:#1a1a1a;"></div>
<div style="left:1452px;top:796px;width:7px;height:4px;background:#29d42e;"></div>
<div style="left:1451.4px;top:772px;width:1.6px;height:268px;background:#4d8fd4;"></div>
<svg style="left:1445px;top:758px;" width="15" height="18" viewBox="0 0 15 18"><path d="M1 1 L14 1 L14 10 L7.5 17 L1 10Z" fill="#3f93ea"/><path d="M7.5 9 L7.5 17 M5.5 9 L9.5 9" stroke="#1a2f4a" stroke-width="1.2"/></svg>
<svg style="left:0px;top:100px;" width="26" height="470" viewBox="0 100 26 470"><path d="M-1 108.6 L23.8 133.4 L-1 158.2Z M-1 232 L23.8 256.8 L-1 281.6Z M-1 516 L23.8 540.6 L-1 565.2Z" fill="#ffffff"/></svg>
</body></html>
